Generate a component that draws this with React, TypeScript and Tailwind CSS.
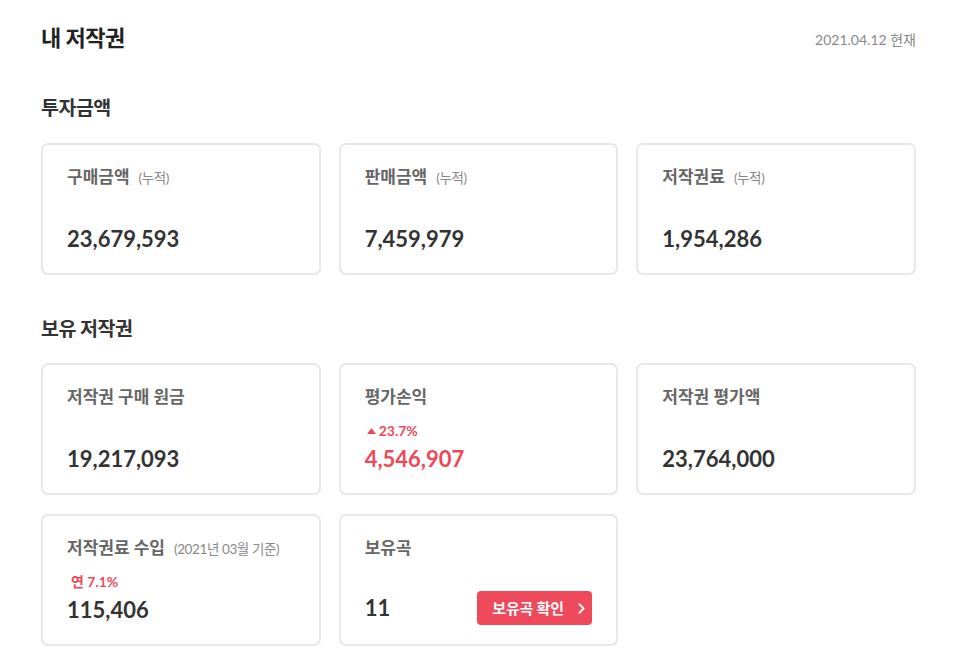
import { ChevronRight } from 'lucide-react';

const font = 'font-[Lato,"Noto_Sans_CJK_KR",sans-serif]';

interface CardProps {
  label: string;
  note?: string;
  change?: React.ReactNode;
  value: string;
  red?: boolean;
  action?: boolean;
}

function Card({ label, note, change, value, red, action }: CardProps) {
  return (
    <div className="h-[132px] border-2 border-[#e8e8e8] rounded-[7px] bg-white px-[24px] pt-[19px] pb-[19px] flex flex-col">
      <div className="flex items-baseline">
        <span className="text-[17px] font-bold text-[#666]">{label}</span>
        {note && <span className="ml-[9px] text-[13.5px] text-[#888] tracking-[-0.4px]">{note}</span>}
      </div>
      <div className="mt-auto">
        {change && <div className="text-[14px] font-bold text-[#ef4859] leading-[18px] mb-[4px]">{change}</div>}
        <div className="flex items-center justify-between">
          <span className={`text-[22px] font-bold leading-[30px] ${red ? 'text-[#ef4859]' : 'text-[#333]'}`}>
            {value}
          </span>
          {action && (
            <button className="h-[34px] w-[115px] rounded-[4px] bg-[#ee4a5c] text-white text-[15px] font-bold flex items-center pl-[15px] gap-[9px] tracking-[-0.2px]">
              보유곡 확인
              <ChevronRight className="w-[17px] h-[17px]" strokeWidth={2.6} />
            </button>
          )}
        </div>
      </div>
    </div>
  );
}

export default function App() {
  return (
    <div className={`min-h-screen bg-white ${font} pl-[41px] pr-[48px] pt-[24px]`}>
      <header className="flex items-end justify-between h-[28px]">
        <h1 className="text-[22px] font-bold text-[#222] leading-[28px] tracking-[-0.5px]">내 저작권</h1>
        <span className="text-[14px] text-[#888] leading-[24px]">2021.04.12 현재</span>
      </header>

      <h2 className="mt-[43px] text-[19.5px] font-bold text-[#333] leading-[26px] tracking-[-0.5px]">투자금액</h2>
      <div className="mt-[22px] grid grid-cols-3 gap-x-[18px]">
        <Card label="구매금액" note="(누적)" value="23,679,593" />
        <Card label="판매금액" note="(누적)" value="7,459,979" />
        <Card label="저작권료" note="(누적)" value="1,954,286" />
      </div>

      <h2 className="mt-[41px] text-[19.5px] font-bold text-[#333] leading-[26px] tracking-[-0.5px]">보유 저작권</h2>
      <div className="mt-[21px] grid grid-cols-3 gap-x-[18px] gap-y-[19px]">
        <Card label="저작권 구매 원금" value="19,217,093" />
        <Card
          label="평가손익"
          change={
            <span className="flex items-center gap-[3px] ml-[2px]">
              <svg width="9" height="6" viewBox="0 0 9 6"><path d="M4.5 0L9 6H0z" fill="#ef4859" /></svg>
              23.7%
            </span>
          }
          value="4,546,907"
          red
        />
        <Card label="저작권 평가액" value="23,764,000" />
        <Card
          label="저작권료 수입"
          note="(2021년 03월 기준)"
          change={<span className="ml-[4px]">연 7.1%</span>}
          value="115,406"
        />
        <Card label="보유곡" value="11" action />
      </div>
    </div>
  );
}
